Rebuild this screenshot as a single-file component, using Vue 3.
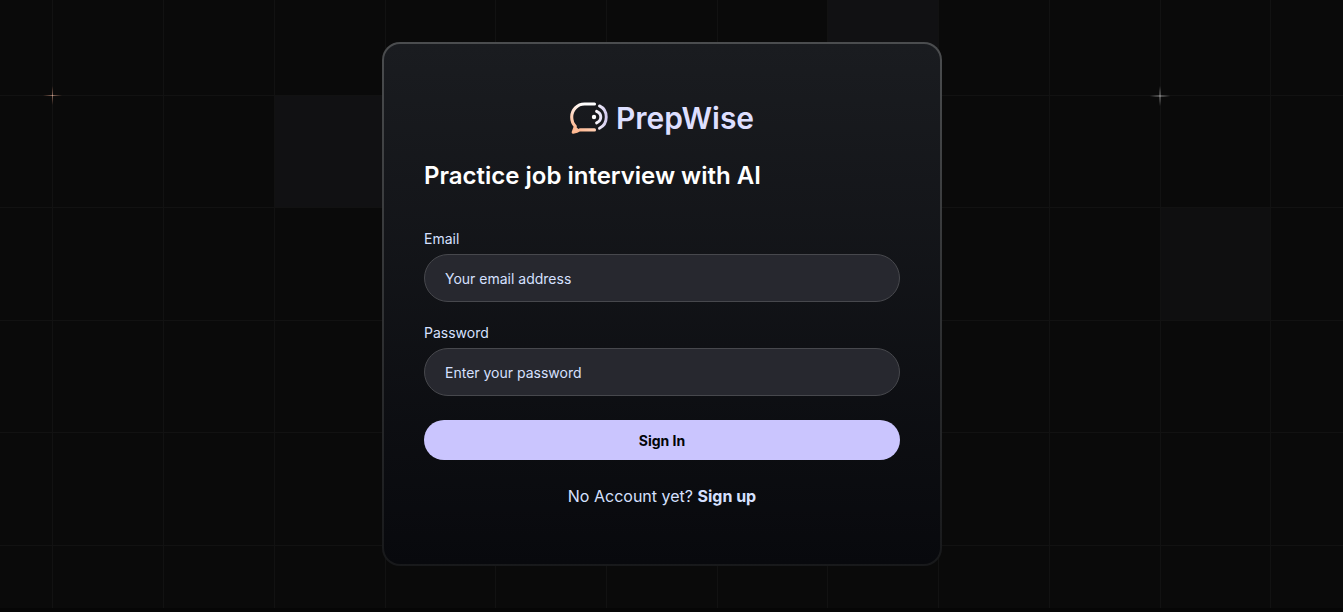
<script setup>
import { ref } from 'vue'

const email = ref('')
const password = ref('')

const columns = [52, 163, 274, 385, 495, 606, 717, 827, 938, 1049, 1160, 1270]
const rows = [95, 207, 320, 432, 545]
</script>

<template>
  <main class="page">
    <svg class="pattern" viewBox="0 0 1343 612" preserveAspectRatio="none" aria-hidden="true">
      <defs>
        <radialGradient id="spark-white">
          <stop offset="0" stop-color="#fff" stop-opacity="0.5" />
          <stop offset="1" stop-color="#fff" stop-opacity="0" />
        </radialGradient>
        <radialGradient id="spark-peach">
          <stop offset="0" stop-color="#ffc8b0" stop-opacity="0.5" />
          <stop offset="1" stop-color="#ff9a70" stop-opacity="0" />
        </radialGradient>
      </defs>
      <rect x="274" y="95" width="111" height="112" fill="#111113" />
      <rect x="827" y="0" width="111" height="95" fill="#111113" />
      <rect x="1160" y="207" width="110" height="113" fill="#0f0f10" />
      <rect v-for="x in columns" :key="'c' + x" :x="x" y="0" width="1" height="608" class="line" />
      <rect v-for="y in rows" :key="'r' + y" x="0" :y="y" width="1343" height="1" class="line" />
      <rect x="0" y="608" width="1343" height="4" fill="#060606" />
      <rect x="43" y="95" width="19" height="1" fill="url(#spark-peach)" />
      <rect x="52" y="86" width="1" height="19" fill="url(#spark-peach)" />
      <ellipse cx="1160" cy="96" rx="12" ry="1" fill="url(#spark-white)" />
      <ellipse cx="1160" cy="96" rx="1" ry="12" fill="url(#spark-white)" />
    </svg>

    <section class="card">
      <div class="brand">
        <svg class="logo" width="38" height="32" viewBox="0 0 38 32" fill="none" aria-hidden="true">
          <defs>
            <linearGradient id="bubble" x1="22" y1="1" x2="6" y2="31" gradientUnits="userSpaceOnUse">
              <stop offset="0.15" stop-color="#fff" />
              <stop offset="0.9" stop-color="#ffb78f" />
            </linearGradient>
            <linearGradient id="waves" x1="24" y1="16" x2="38" y2="16" gradientUnits="userSpaceOnUse">
              <stop offset="0" stop-color="#fff" />
              <stop offset="1" stop-color="#cfc6ee" />
            </linearGradient>
          </defs>
          <path
            d="M24.500 2H14.500C7.300 2 1.700 7.800 1.700 15C1.700 18.800 3 22 5.300 24.400L3.200 30.300C5.600 30.100 8 29.300 9.800 27.900H24.500"
            stroke="url(#bubble)" stroke-width="3.100" stroke-linecap="round" stroke-linejoin="round"
          />
          <path d="M3.200 30.300L5.300 24.400L9.800 27.900Z" fill="#ffbd99" />
          <circle cx="24" cy="15" r="2.200" fill="#fff" />
          <path
            d="M26.600 9.300C32.200 11.700 32.200 18.500 26.600 20.900M29.500 3.900C38.500 8.100 38.500 22.100 29.500 26.300"
            stroke="url(#waves)" stroke-width="2.900" stroke-linecap="round"
          />
        </svg>
        <h2 class="name">PrepWise</h2>
      </div>

      <h3 class="tagline">Practice job interview with AI</h3>

      <form class="form" @submit.prevent>
        <div class="field">
          <label for="email">Email</label>
          <input id="email" v-model="email" type="email" placeholder="Your email address" />
        </div>
        <div class="field">
          <label for="password">Password</label>
          <input id="password" v-model="password" type="password" placeholder="Enter your password" />
        </div>
        <button type="submit" class="submit">Sign In</button>
      </form>

      <p class="switch">No Account yet? <a href="#sign-up">Sign up</a></p>
    </section>
  </main>
</template>

<style>
body {
  margin: 0;
  background: #0a0a0a;
}
</style>

<style scoped>
.page {
  position: relative;
  display: flex;
  align-items: center;
  justify-content: center;
  box-sizing: border-box;
  min-height: 100vh;
  padding: 20px 19px 24px 0;
  background: #0a0a0a;
  font-family: Inter, "Liberation Sans", sans-serif;
  color: #d6e0ff;
}

.pattern {
  position: absolute;
  inset: 0;
  width: 100%;
  height: 100%;
}

.line {
  fill: #121212;
}

.card {
  position: relative;
  box-sizing: border-box;
  display: flex;
  flex-direction: column;
  width: 100%;
  max-width: 560px;
  padding: 56px 40px;
  border: 2px solid transparent;
  border-radius: 18px;
  background:
    linear-gradient(180deg, #1a1c20, #08090d) padding-box,
    linear-gradient(180deg, #4b4d4f, #18191b) border-box;
}

.brand {
  display: flex;
  align-items: center;
  justify-content: center;
  gap: 8px;
  margin-bottom: 24px;
}

.name,
.tagline,
.switch {
  margin: 0;
}

.name {
  font-size: 30px;
  line-height: 36px;
  font-weight: 600;
  color: #dddfff;
}

.tagline {
  margin-bottom: 36px;
  font-size: 24px;
  line-height: 32px;
  font-weight: 600;
  color: #fff;
}

.form {
  display: flex;
  flex-direction: column;
  gap: 20px;
}

.field {
  display: flex;
  flex-direction: column;
  gap: 4px;
}

.field label {
  font-size: 14px;
  line-height: 22px;
}

.field input {
  box-sizing: border-box;
  width: 100%;
  height: 48px;
  padding: 0 20px;
  border: 1px solid #47484d;
  border-radius: 24px;
  outline: none;
  background: #27282f;
  font-family: inherit;
  font-size: 14px;
  color: #d6e0ff;
}

.field input::placeholder {
  color: #d6e0ff;
  opacity: 1;
}

.submit {
  height: 40px;
  margin-top: 4px;
  padding: 0 16px;
  border: 0;
  border-radius: 20px;
  background: #cac5fe;
  font-family: inherit;
  font-size: 14px;
  font-weight: 700;
  color: #020408;
  cursor: pointer;
}

.switch {
  margin-top: 24px;
  font-size: 16px;
  line-height: 24px;
  text-align: center;
}

.switch a {
  font-weight: 700;
  color: inherit;
  text-decoration: none;
}
</style>
